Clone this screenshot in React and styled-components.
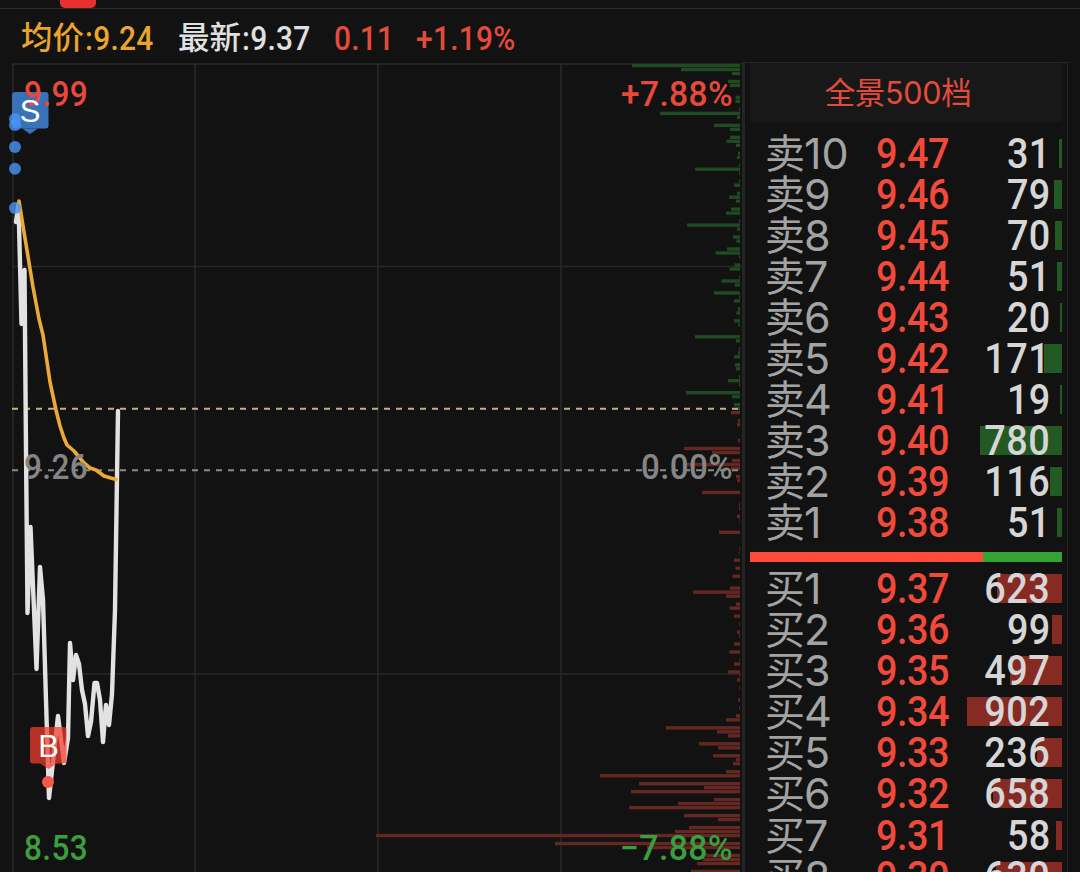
import styled, { createGlobalStyle } from 'styled-components'

const GlobalStyle = createGlobalStyle`
	* {
		box-sizing: border-box;
	}
	body {
		margin: 0;
		background-color: #121212;
		overflow: hidden;
	}
`

const Page = styled.div`
	display: flex;
	flex-direction: column;
	width: 1080px;
	height: 872px;
	overflow: hidden;
	background-color: #121212;
	color: #e0e0e0;
	font-family: Roboto, 'Noto Sans CJK SC', sans-serif;
`

const TabStrip = styled.div`
	flex: none;
	height: 9px;
	padding-left: 60px;
	border-bottom: 1px solid #2a2a2a;
`
const TabMark = styled.div`
	width: 36px;
	height: 8px;
	border-radius: 0 0 5px 5px;
	background-color: #e93030;
`

const QuoteBar = styled.div`
	flex: none;
	display: flex;
	align-items: center;
	height: 53px;
	padding: 6px 0 0 21px;
	line-height: 40px;
	white-space: nowrap;
`
const Quote = styled.div`
	display: flex;
	width: ${({ width }) => width}px;
	font-size: 32.5px;
	font-weight: 500;
	color: ${({ color }) => color};
`
const QuoteName = styled.span`
	width: 64px;
	font-size: 31.5px;
`
const QuoteValue = styled.span`
	letter-spacing: 0.3px;
	transform: scaleX(0.92);
	transform-origin: left;
`

const Body = styled.div`
	flex: 1;
	display: flex;
	min-height: 0;
`
const Chart = styled.svg`
	flex: none;
	display: block;
	width: 745px;
	height: 810px;
`

const Book = styled.div`
	flex: none;
	display: flex;
	flex-direction: column;
	width: 323px;
	height: 850px;
	padding: 0 5px;
	border: 1px solid #252525;
	border-left: none;
`
const BookHeader = styled.div`
	flex: none;
	height: 59px;
	line-height: 60px;
	padding-right: 16px;
	margin-bottom: 10.6px;
	background-color: #181818;
	color: #e34b3c;
	font-family: Inter, 'Noto Sans CJK SC', sans-serif;
	font-size: 30.5px;
	font-weight: 400;
	letter-spacing: -0.3px;
	text-align: center;
`
const Level = styled.div`
	flex: none;
	display: grid;
	grid-template-columns: 111px 89px 1fr;
	align-items: center;
	height: 41.1px;
	padding-left: 15px;
	line-height: 41px;
	white-space: nowrap;
`
const LevelName = styled.div`
	display: flex;
	font-family: Inter, 'Noto Sans CJK SC', sans-serif;
	font-size: 43px;
	font-weight: 400;
	color: #a3a3a3;
`
const Side = styled.span`
	width: 39px;
	font-size: 40px;
`
const Price = styled.div`
	font-size: 42px;
	font-weight: 500;
	letter-spacing: -0.5px;
	color: #f24a3a;
	transform: scaleX(0.9);
	transform-origin: left;
`
const Volume = styled.div`
	display: flex;
	justify-content: flex-end;
	align-items: center;
	height: 29px;
	padding-right: 11.5px;
	background: linear-gradient(${({ color }) => color}, ${({ color }) => color}) no-repeat right / ${({ bar }) => bar}px 100%;
`
const VolumeText = styled.span`
	font-size: 42px;
	font-weight: 500;
	letter-spacing: 0.5px;
	color: #d6d6d6;
	transform: scaleX(0.9);
	transform-origin: right;
`
const Ratio = styled.div`
	flex: none;
	display: flex;
	height: 10px;
	margin: 8.4px 0 6px;
	background-color: #33a333;
`
const RatioBuy = styled.div`
	width: 232.5px;
	background-color: #ff4a37;
`

const sells = [
	['10', '9.47', 31, 3],
	['9', '9.46', 79, 8],
	['8', '9.45', 70, 7],
	['7', '9.44', 51, 5],
	['6', '9.43', 20, 2],
	['5', '9.42', 171, 18],
	['4', '9.41', 19, 2],
	['3', '9.40', 780, 82],
	['2', '9.39', 116, 12],
	['1', '9.38', 51, 5],
]
const buys = [
	['1', '9.37', 623, 65],
	['2', '9.36', 99, 10],
	['3', '9.35', 497, 52],
	['4', '9.34', 902, 95],
	['5', '9.33', 236, 25],
	['6', '9.32', 658, 69],
	['7', '9.31', 58, 6],
	['8', '9.30', 630, 66],
]

// [price slot, bar length], one slot is four pixels high
const sellDepth = [
	[0, 108], [1, 59], [2, 8], [4, 12], [5, 10], [8, 4.5], [9, 4.5], [11, 1], [12, 80], [13, 3],
	[15, 26], [16, 10], [18, 10], [19, 13.5], [20, 4], [22, 2], [23, 3], [25, 1], [26, 45], [27, 1],
	[29, 1], [30, 6], [32, 3], [33, 11], [34, 4], [36, 9], [37, 14], [39, 1], [40, 53], [41, 3],
	[43, 7], [44, 3.5], [46, 13], [47, 24.5], [48, 1], [50, 5.5], [51, 10.5], [53, 1], [54, 18.5],
	[55, 5], [57, 26], [58, 1], [59, 6], [61, 2], [62, 3.5], [64, 6], [65, 1.5], [68, 45], [69, 4],
	[71, 1], [72, 2], [73, 6], [75, 5], [76, 4], [78, 1], [79, 12], [80, 1], [82, 54], [83, 8],
	[85, 6], [86, 3],
]
const buyDepth = [
	[87, 9], [89, 2], [90, 3], [94, 2], [96, 56], [97, 28], [99, 8], [100, 54], [101, 9], [103, 4],
	[104, 3], [107, 38], [110, 1], [111, 1], [113, 3], [114, 0.5], [117, 21], [121, 0.7], [122, 0.7],
	[124, 6], [126, 4.5], [128, 7.5], [131, 10], [132, 47], [133, 14], [135, 4], [136, 10.5],
	[138, 6], [140, 0.8], [142, 3], [143, 1], [145, 6], [147, 10.5], [149, 0.7], [150, 6], [152, 12],
	[153, 0.7], [154, 3], [156, 0.8], [159, 2], [161, 1], [163, 4], [164, 14], [166, 74], [167, 23],
	[168, 12], [170, 41], [171, 22], [173, 27], [174, 4], [175, 7], [177, 14], [178, 140],
	[180, 101], [181, 36], [182, 109], [184, 26], [185, 62], [186, 111], [188, 56], [189, 22],
	[191, 51], [192, 65], [193, 364], [195, 185], [196, 93], [198, 34], [199, 37], [200, 43],
	[202, 49],
]

function Depth({ data, color }) {
	return data.map(([slot, length]) => (
		<rect key={slot} x={740 - length} y={63.8 + slot * 3.99} width={length} height="3.4" fill={color} />
	))
}

function AxisLabel({ x, y, width, color, children }) {
	return (
		<text x={x} y={y} textLength={width} lengthAdjust="spacingAndGlyphs" fill={color} fontSize="35" fontWeight="500" letterSpacing="0.4">
			{children}
		</text>
	)
}

function PriceChart() {
	return (
		<Chart viewBox="0 62 745 810">
			<g stroke="#282828" strokeWidth="1.6">
				<path d="M12 64H745M12 266.5H745M12 674H745" />
				<path d="M13 64V872M195 64V872M378 64V872M561 64V872" />
			</g>
			<path d="M743.5 62V872" stroke="#242424" strokeWidth="3" />
			<Depth data={sellDepth} color="#1f4a22" />
			<Depth data={buyDepth} color="#642722" />
			<path d="M12 408.7H740" stroke="#c9b084" strokeWidth="2" strokeDasharray="6 6" />
			<path d="M12 470.2H740" stroke="#8a8a8a" strokeWidth="2" strokeDasharray="6 6" />
			<path
				d="M16 222L18.5 204L21.5 324L24.5 270L26 450L27.5 613L30.5 527L36.5 669L40 567L43 600L46 700L49 798L58 716L64 763L68 738L70 643L73 680L76 655L79 664L82 690L85 704L88 736L91 722L94.5 683L97 683L100 700L103 742L106 705L109 725L112 694L115 610L118 411"
				fill="none"
				stroke="#e2e2e2"
				strokeWidth="4.4"
				strokeLinecap="round"
				strokeLinejoin="round"
			/>
			<path
				d="M19 201L24 232L33 287L39 319L43 335L50 382L56 410L60 426L64 438L67 445L74 451L84 463L90 468L96 470L104 476L116 479.5"
				fill="none"
				stroke="#eba937"
				strokeWidth="3.6"
				strokeLinecap="round"
				strokeLinejoin="round"
			/>
			<g fill="#3a72b8">
				<rect x="12" y="92" width="36.5" height="36.5" rx="3" />
				<path d="M22 128.5H38L30 134Z" />
			</g>
			<AxisLabel x="24" y="106" width="64" color="#e8493b">9.99</AxisLabel>
			<text x="30" y="121.5" textAnchor="middle" fill="#fff" fontSize="31" fontFamily="Liberation Sans">S</text>
			<g fill="#4a94f5" fillOpacity="0.8">
				<circle cx="15" cy="119" r="6" />
				<circle cx="15" cy="125" r="6" />
				<circle cx="15" cy="147" r="6" />
				<circle cx="15" cy="168.7" r="6" />
				<circle cx="15" cy="208" r="6" />
			</g>
			<g fill="#f53c2d" fillOpacity="0.72">
				<rect x="30" y="727" width="36.5" height="36.5" rx="3" />
				<path d="M40 763.5H57L48.5 769Z" />
			</g>
			<circle cx="48" cy="782" r="6" fill="#f6594a" />
			<text x="48.5" y="756.5" textAnchor="middle" fill="#fff" fontSize="31" fontFamily="Liberation Sans">B</text>
			<AxisLabel x="24" y="479" width="64" color="#858585">9.26</AxisLabel>
			<AxisLabel x="24" y="860" width="64" color="#3c9f3e">8.53</AxisLabel>
			<AxisLabel x="621" y="106" width="112" color="#e8493b">+7.88%</AxisLabel>
			<AxisLabel x="641" y="479" width="92" color="#858585">0.00%</AxisLabel>
			<AxisLabel x="620" y="860" width="113" color="#3c9f3e">−7.88%</AxisLabel>
		</Chart>
	)
}

function Levels({ side, rows, color }) {
	return rows.map(([level, price, volume, bar]) => (
		<Level key={level}>
			<LevelName>
				<Side>{side}</Side>
				{level}
			</LevelName>
			<Price>{price}</Price>
			<Volume bar={bar} color={color}>
				<VolumeText>{volume}</VolumeText>
			</Volume>
		</Level>
	))
}

function App() {
	return (
		<Page>
			<GlobalStyle />
			<TabStrip>
				<TabMark />
			</TabStrip>
			<QuoteBar>
				<Quote width={157} color="#eba52b">
					<QuoteName>均价</QuoteName>
					<QuoteValue>:9.24</QuoteValue>
				</Quote>
				<Quote width={156} color="#e0e0e0">
					<QuoteName>最新</QuoteName>
					<QuoteValue>:9.37</QuoteValue>
				</Quote>
				<Quote width={82} color="#e34b3c">
					<QuoteValue>0.11</QuoteValue>
				</Quote>
				<Quote width={110} color="#e34b3c">
					<QuoteValue>+1.19%</QuoteValue>
				</Quote>
			</QuoteBar>
			<Body>
				<PriceChart />
				<Book>
					<BookHeader>全景500档</BookHeader>
					<Levels side="卖" rows={sells} color="#235a23" />
					<Ratio>
						<RatioBuy />
					</Ratio>
					<Levels side="买" rows={buys} color="#862b24" />
				</Book>
			</Body>
		</Page>
	)
}

export default App
